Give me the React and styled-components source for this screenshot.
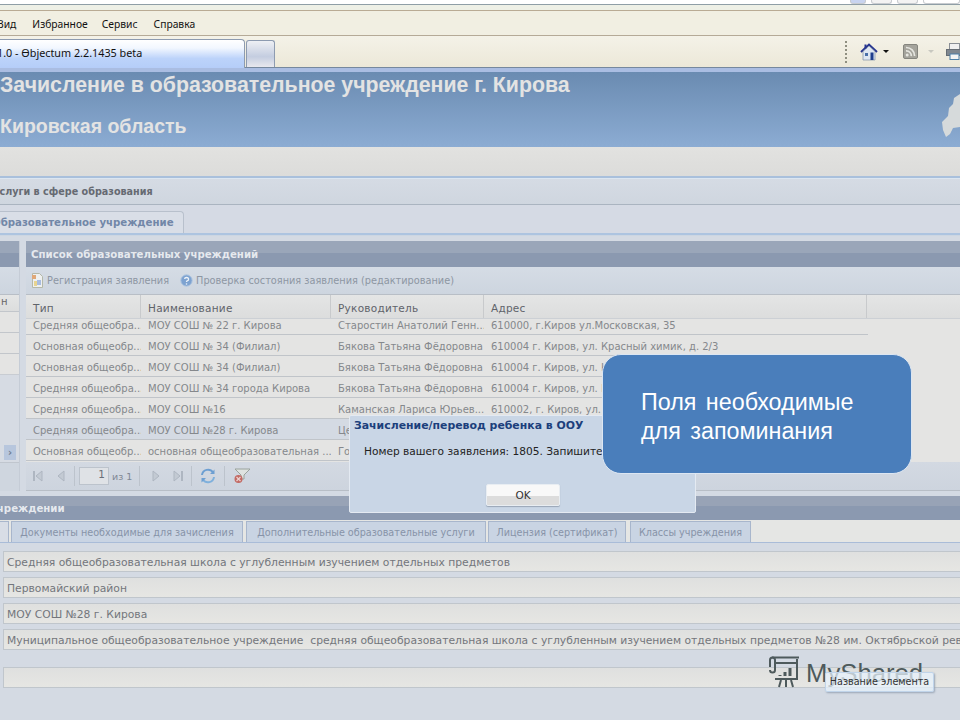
import React from "react";
import styled, { createGlobalStyle } from "styled-components";

const GlobalStyle = createGlobalStyle`
  html, body {
    margin: 0;
    padding: 0;
    background: #d4dae3;
  }
  * {
    box-sizing: border-box;
  }
`;

const Page = styled.div`
  position: relative;
  width: 960px;
  height: 720px;
  overflow: hidden;
  background: #d4dae3;
  font-family: "DejaVu Sans", sans-serif;
  font-size: 10px;
`;

const TopStrip = styled.div`
  height: 11px;
  background: linear-gradient(#ffffff 0 4px, #8f9ea6 4px 5px, #eef0e6 5px 10px, #b9ab94 10px 11px);
  display: flex;
  justify-content: flex-end;
  align-items: flex-start;
  gap: 5px;
`;

const TopKey = styled.div`
  width: ${(p) => p.$w}px;
  height: 4px;
  background: ${(p) => p.$bg || "#f3f3f3"};
  border: 1px solid #c8ccd0;
  border-top: none;
  border-radius: 0 0 3px 3px;
`;

const MenuBar = styled.div`
  height: 25px;
  padding-top: 1px;
  background: #f1efe2;
  border-bottom: 1px solid #b5aa97;
  display: flex;
  align-items: center;
  color: #111;
  font-family: "Noto Sans", sans-serif;
  font-size: 10.3px;
`;

const MenuItem = styled.span`
  margin-left: ${(p) => p.$ml}px;
`;

const BrowserBar = styled.div`
  height: 32px;
  padding-top: 3px;
  background: linear-gradient(#f4f2e8, #ece8d8);
  display: flex;
  align-items: flex-end;
  border-bottom: 1px solid #76889e;
`;

const PageTab = styled.div`
  width: 245px;
  height: 29px;
  padding: 0 0 3px 0;
  margin-bottom: -1px;
  border: 1px solid #8d9bb0;
  border-left: none;
  border-bottom: none;
  border-radius: 0 4px 0 0;
  background: linear-gradient(#ffffff, #f2f7ff 8px, #bcd3fa 66%, #b5cdf8);
  display: flex;
  align-items: center;
  font-family: "Noto Sans", sans-serif;
  font-size: 10.8px;
  color: #111;
  white-space: nowrap;
`;

const TabText = styled.span`
  margin-left: -3px;
`;

const NewTab = styled.div`
  width: 29px;
  height: 27px;
  margin-left: 1px;
  border: 1px solid #8d9bb0;
  border-bottom: none;
  border-radius: 3px 3px 0 0;
  background: linear-gradient(#eef0f4, #c4cde0 60%, #e8e8ee);
`;

const Tools = styled.div`
  margin-left: auto;
  height: 100%;
  padding: 3px 0 6px 0;
  width: 115px;
  display: flex;
  align-items: center;
  & > svg {
    flex: none;
  }
`;

const Grip = styled.div`
  width: 2px;
  height: 22px;
  border-left: 2px dotted #8f8f80;
  margin-right: 13px;
`;

const Caret = styled.span`
  flex: none;
  width: 0;
  height: 0;
  margin: 0 ${(p) => p.$mr || 12}px 0 ${(p) => p.$ml || 7}px;
  border-left: 3px solid transparent;
  border-right: 3px solid transparent;
  border-top: 3px solid ${(p) => p.$c || "#111"};
`;

const ThemeStripe = styled.div`
  height: 4px;
  background: #aabde2;
`;

const Banner = styled.header`
  position: relative;
  height: 75px;
  background: linear-gradient(#6a8bb1, #8cacd3);
  color: #e3e3e3;
  font-family: "Liberation Sans", sans-serif;
  font-weight: bold;
  overflow: hidden;
`;

const BannerTitle = styled.div`
  font-size: 21.3px;
  line-height: 24px;
  padding-top: 1px;
`;

const BannerRegion = styled.div`
  font-size: 19.5px;
  line-height: 22px;
  margin-top: 18px;
`;

const RegionMap = styled.svg`
  position: absolute;
  right: 0;
  top: 20px;
`;

const GrayBand = styled.div`
  height: 31px;
  background: linear-gradient(#e2e2e0, #dcdcda);
  border-bottom: 2px solid #a9c0dc;
`;

const SectionTitle = styled.div`
  height: 27px;
  background: linear-gradient(#d5dbe4, #cfd6df);
  border-top: 1px solid #dce6f0;
  border-bottom: 1px solid #aab4c0;
  display: flex;
  align-items: center;
  color: #666a72;
  font-weight: bold;
  font-size: 9.65px;
  white-space: nowrap;
`;

const Clip = styled.span`
  margin-left: ${(p) => p.$ml}px;
`;

const ActiveTabRow = styled.div`
  height: 30px;
  padding-top: 6px;
  background: #d5dae4;
  border-bottom: 2px solid #adc4e0;
  display: flex;
`;

const ActiveTab = styled.div`
  width: 184px;
  height: 22px;
  padding-bottom: 1px;
  border: 1px solid #b8c0cc;
  border-left: none;
  border-bottom: none;
  border-radius: 0 4px 0 0;
  background: #d9dee7;
  display: flex;
  align-items: center;
  color: #7287a8;
  font-weight: bold;
  font-size: 10.2px;
  white-space: nowrap;
`;

const Panels = styled.div`
  height: 261px;
  padding-top: 5px;
  border-top: 1px solid #ccd6e2;
  display: flex;
  gap: 6px;
`;

const PanelHead = styled.div`
  height: 26px;
  padding: 1px 5px 0;
  background: linear-gradient(#9aa6b9 0 12px, #8b99b0 12px);
  display: flex;
  align-items: center;
  color: #e6e9ee;
  font-weight: bold;
  font-size: 10.2px;
  white-space: nowrap;
`;

const SidePanel = styled.aside`
  width: 20px;
  height: 250px;
  overflow: hidden;
  border-right: 1px solid #c5ccd6;
  display: flex;
  flex-direction: column;
`;

const Toolbar = styled.div`
  height: 28px;
  padding: 0 0 0 5px;
  background: linear-gradient(#d5dce5, #cdd5df);
  border-bottom: 1px solid #b8bec6;
  display: flex;
  align-items: center;
  gap: 11px;
  color: #8d96a2;
  font-size: 9.75px;
  white-space: nowrap;
`;

const ToolButton = styled.span`
  display: flex;
  align-items: center;
  gap: 3px;
`;

const SideHead = styled.div`
  height: 16px;
  background: linear-gradient(#e4e5e5, #dcdddd);
  color: #666;
  line-height: 14px;
  overflow: hidden;
`;

const SideRow = styled.div`
  flex: none;
  height: 21px;
  background: #e4e4e3;
  border-top: 1px solid #c2c6cb;
`;

const SideFill = styled.div`
  flex: 1;
  background: #d6dbe3;
  border-top: 1px solid #c8ccd2;
  padding: 70px 0 0 4px;
`;

const ScrollBtn = styled.div`
  width: 12px;
  height: 15px;
  background: #b7c6dd;
  color: #6f7c90;
  font-weight: bold;
  font-size: 10px;
  display: flex;
  align-items: center;
  justify-content: center;
`;

const SidePager = styled.div`
  flex: none;
  height: 29px;
  background: #cfd6df;
  border-top: 1px solid #c0c6ce;
`;

const MainPanel = styled.section`
  flex: 1;
  height: 250px;
  display: flex;
  flex-direction: column;
  min-width: 0;
`;

const COLUMNS = "115px 190px 153px 383px 1fr";
const ROW_COLUMNS = "115px 190px 153px 383px";

const GridHead = styled.div`
  display: grid;
  grid-template-columns: ${COLUMNS};
  height: 24px;
  background: linear-gradient(#e4e5e5, #dcdddd);
  border-bottom: 1px solid #ccd0d5;
`;

const HeadCell = styled.div`
  padding: 7px 0 0 7px;
  font-size: 10.5px;
  letter-spacing: 0.25px;
  color: #5f636a;
  border-right: 1px solid #c8cacc;
`;

const GridBody = styled.div`
  height: 143px;
  overflow: hidden;
  background: #e4e4e3;
`;

const Row = styled.div`
  display: grid;
  grid-template-columns: ${ROW_COLUMNS};
  width: 842px;
  height: 21px;
  margin-top: ${(p) => (p.$first ? -5 : 0)}px;
  background: ${(p) => (p.$selected ? "#d4dae3" : "transparent")};
  border-bottom: 1px solid #c0c4c9;
`;

const Cell = styled.div`
  padding: 2px 0 0 7px;
  line-height: 20px;
  color: #85888c;
  white-space: nowrap;
  overflow: hidden;
`;

const Pager = styled.div`
  height: 29px;
  padding-left: 7px;
  background: linear-gradient(#d3d9e2, #cdd4de);
  border-bottom: 1px solid #b8bec6;
  display: flex;
  align-items: center;
  color: #808794;
  font-size: 9.5px;
`;

const PageInput = styled.div`
  width: 30px;
  height: 18px;
  margin: 0 3px 0 0;
  padding-right: 3px;
  background: #dfe2e6;
  border: 1px solid #bcc3cc;
  text-align: right;
  color: #6a6f78;
  font-size: 10.5px;
`;

const PagerSep = styled.div`
  width: 1px;
  height: 20px;
  margin: 0 ${(p) => p.$m || 8}px 0 ${(p) => p.$ml || p.$m || 8}px;
  background: #bcc3cc;
`;

const PagerIcon = styled.svg`
  margin-right: ${(p) => p.$mr || 0}px;
  flex: none;
`;

const DetailHead = styled(PanelHead)`
  height: 24px;
  padding-left: 0;
  background: linear-gradient(#98a3b6 0 10px, #8b99b0 10px);
`;

const DetailTabs = styled.div`
  height: 23px;
  padding-top: 1px;
  border-bottom: 1px solid #a9bcd8;
  background: #e5e6e4;
  display: flex;
  gap: 2px;
`;

const DetailTab = styled.div`
  width: ${(p) => p.$w}px;
  margin-right: ${(p) => p.$mr || 0}px;
  border: 1px solid #a8b6cc;
  border-left: ${(p) => (p.$cut ? "none" : "1px solid #a8b6cc")};
  border-bottom: none;
  background: ${(p) => (p.$blank ? "#d8dde6" : "#c9d4e3")};
  color: #8793a8;
  font-size: 9.65px;
  line-height: 22px;
  text-align: center;
  white-space: nowrap;
  overflow: hidden;
`;

const Fields = styled.div`
  padding: 8px 0 0 3px;
  display: flex;
  flex-direction: column;
  gap: 5px;
`;

const Field = styled.div`
  height: 21px;
  margin-top: ${(p) => p.$mt || 0}px;
  padding-left: 3px;
  background: linear-gradient(#dfe0df, #e6e6e3);
  border: 1px solid #c0c6cc;
  border-right: none;
  line-height: 21px;
  color: #73767c;
  font-size: 10.75px;
  white-space: pre;
  overflow: hidden;
`;

const Dialog = styled.div`
  position: absolute;
  left: 349px;
  top: 415px;
  width: 347px;
  height: 98px;
  background: #c9d6e6;
  border: 1px solid #e4eaf2;
  border-radius: 2px;
  padding: 3px 0 0 4px;
  display: flex;
  flex-direction: column;
`;

const DialogTitle = styled.div`
  color: #1c3f7c;
  font-weight: bold;
  font-size: 10.9px;
  line-height: 14px;
`;

const DialogText = styled.div`
  margin: 11px 0 0 10px;
  color: #222;
  font-size: 10.6px;
  line-height: 14px;
  white-space: nowrap;
`;

const OkButton = styled.div`
  width: 74px;
  height: 22px;
  margin: 26px 0 0 132px;
  background: linear-gradient(#f8f8f8 0 55%, #dcdcdc 55%);
  border: 1px solid #e8edf2;
  box-shadow: 0 1px 1px #9aa6b6;
  border-radius: 2px;
  text-align: center;
  line-height: 20px;
  color: #333;
  font-size: 10.5px;
`;

const Callout = styled.div`
  position: absolute;
  left: 602px;
  top: 354px;
  width: 310px;
  height: 120px;
  padding: 33px 0 0 38px;
  background: #4a7ebb;
  border: 1px solid #dce6f2;
  border-radius: 19px;
  color: #fff;
  font-family: "Liberation Sans", sans-serif;
  font-size: 23.3px;
  line-height: 29px;
  word-spacing: 3px;
`;

const Watermark = styled.div`
  position: absolute;
  left: 767px;
  top: 656px;
  display: flex;
  align-items: flex-start;
  gap: 5px;
  color: #4e5a5c;
  font-family: "Liberation Sans", sans-serif;
  font-size: 25.7px;
  line-height: 34px;
`;

const Tooltip = styled.div`
  position: absolute;
  left: 825px;
  top: 672px;
  width: 109px;
  height: 20px;
  background: rgba(232, 242, 252, 0.72);
  border: 1px solid #c0d4ea;
  border-radius: 2px;
  box-shadow: 1px 1px 2px #9aa6b6;
  text-align: center;
  line-height: 18px;
  color: #333;
  font-size: 9.6px;
`;

const ROWS = [
  ["Средняя общеобра...", "МОУ СОШ № 22 г. Кирова", "Старостин Анатолий Генн...", "610000, г.Киров ул.Московская, 35"],
  ["Основная общеобр...", "МОУ СОШ № 34 (Филиал)", "Бякова Татьяна Фёдоровна", "610004 г. Киров, ул. Красный химик, д. 2/3"],
  ["Основная общеобр...", "МОУ СОШ № 34 (Филиал)", "Бякова Татьяна Фёдоровна", "610004 г. Киров, ул. Красный химик, д. 2/3"],
  ["Средняя общеобра...", "МОУ СОШ № 34 города Кирова", "Бякова Татьяна Фёдоровна", "610004 г. Киров, ул. Красный химик, д. 2/3"],
  ["Средняя общеобра...", "МОУ СОШ №16", "Каманская Лариса Юрьев...", "610002, г. Киров, ул. Ленина"],
  ["Средняя общеобра...", "МОУ СОШ №28 г. Кирова", "Цепелева Ольга", "610000, г. Киров"],
  ["Основная общеобр...", "основная общеобразовательная ...", "Головина Ирина", "610000, г. Киров"],
];

const HomeIcon = () => (
  <svg width="18" height="18" viewBox="0 0 18 18">
    <path d="M1 9 9 1.500 17 9" fill="none" stroke="#27358f" strokeWidth="2" />
    <path d="M3 8.500V17h12V8.500L9 3z" fill="#dfe7f2" stroke="#7f8fa8" strokeWidth=".7" />
    <rect x="4.500" y="1.500" width="2" height="4" fill="#27358f" />
    <rect x="5" y="10" width="3" height="3" fill="#4a6fa8" />
    <rect x="10.500" y="9.500" width="3" height="7.500" fill="#1f3e8c" />
  </svg>
);

const RssIcon = () => (
  <svg width="15" height="15" viewBox="0 0 15 15">
    <rect x=".5" y=".5" width="14" height="14" rx="1.500" fill="#a4a39b" stroke="#85857e" />
    <circle cx="4.200" cy="11" r="1.500" fill="#e6e6e0" />
    <path d="M3 6.800a5 5 0 0 1 5.300 5.300M3 3.500a8.400 8.400 0 0 1 8.600 8.600" fill="none" stroke="#e6e6e0" strokeWidth="1.700" />
  </svg>
);

const PrintIcon = () => (
  <svg width="16" height="17" viewBox="0 0 16 17">
    <rect x="3.500" y=".5" width="10" height="6" fill="#f0f0f0" stroke="#8a8f96" />
    <rect x=".5" y="6.500" width="16" height="6" fill="#7f8790" stroke="#666d75" />
    <rect x="4" y="11" width="9" height="5.500" fill="#f4f4f4" stroke="#4c7fa8" />
  </svg>
);

const PageIcon = () => (
  <svg width="13" height="15" viewBox="0 0 13 15">
    <path d="M1.500.5h7l3 3v11h-10z" fill="#eef0f0" stroke="#b4b8a8" />
    <rect x="1" y="2" width="4" height="4" fill="#e0a878" />
    <rect x="6" y="7" width="4" height="5" fill="#a8bce0" />
    <rect x="3" y="8" width="3" height="5" fill="#e8d490" />
  </svg>
);

const HelpIcon = () => (
  <svg width="13" height="13" viewBox="0 0 13 13">
    <circle cx="6.500" cy="6.500" r="5.700" fill="#7da2d0" stroke="#b0c6e0" />
    <path d="M4.600 5a2 1.700 0 1 1 2.600 1.800c-.5.3-.7.6-.7 1.200" fill="none" stroke="#eef3f8" strokeWidth="1.300" />
    <circle cx="6.500" cy="10" r=".8" fill="#eef3f8" />
  </svg>
);

const Nav = ({ dir, bar, mr }) => (
  <PagerIcon width="12" height="14" viewBox="0 0 12 14" $mr={mr}>
    <path d={dir === "left" ? "M9 2v10L3 7z" : "M3 2v10l6-5z"} fill="#c3cad3" stroke="#aeb6c1" />
    {bar && <rect x={dir === "left" ? 0 : 10} y="2" width="2" height="10" fill="#aeb6c1" />}
  </PagerIcon>
);

const RefreshIcon = () => (
  <PagerIcon width="16" height="16" viewBox="0 0 16 16">
    <path d="M2 7a6 6 0 0 1 11-2.500" fill="none" stroke="#6d9fd2" strokeWidth="2" />
    <path d="M14 9a6 6 0 0 1-11 2.500" fill="none" stroke="#7fb0dc" strokeWidth="2" />
    <path d="M14.500 1.500v4.500h-4.500zM1.500 14.500V10H6z" fill="#6d9fd2" />
  </PagerIcon>
);

const FilterIcon = () => (
  <PagerIcon width="18" height="16" viewBox="0 0 18 16">
    <path d="M2 1h15l-6 6v4H8V7z" fill="#dfe3e0" stroke="#9aa39c" />
    <circle cx="5.500" cy="11" r="4" fill="#c26a64" />
    <path d="M3.500 9l4 4m0-4l-4 4" stroke="#ecd2d0" strokeWidth="1.200" />
  </PagerIcon>
);

const LogoIcon = () => (
  <svg width="34" height="32" viewBox="0 0 34 32" fill="none" stroke="#4e5a5c" strokeWidth="2">
    <path d="M3 11V4a2.500 2.500 0 0 1 5 0v10a2.500 2.500 0 0 1-5 0" />
    <path d="M5 1.500h27M8 7h22v16H8M30 3v20" />
    <path d="M14 24l-2 7M19 24v7M24 24l2 7" />
    <path d="M13 19v1M18 16v4M23 12v8" strokeWidth="3" />
  </svg>
);

export default function App() {
  return (
    <Page>
      <GlobalStyle />
      <TopStrip>
        <TopKey $w={16} $bg="#c8d4f0" />
        <TopKey $w={21} />
        <TopKey $w={21} />
        <TopKey $w={37} $bg="#fff" />
      </TopStrip>
      <MenuBar>
        <MenuItem $ml={-3}>Вид</MenuItem>
        <MenuItem $ml={16}>Избранное</MenuItem>
        <MenuItem $ml={14}>Сервис</MenuItem>
        <MenuItem $ml={16}>Справка</MenuItem>
      </MenuBar>
      <BrowserBar>
        <PageTab>
          <TabText>1.0 - Өbjectum 2.2.1435 beta</TabText>
        </PageTab>
        <NewTab />
        <Tools>
          <Grip />
          <HomeIcon />
          <Caret $ml={5} $mr={14} />
          <RssIcon />
          <Caret $c="#c8c8c0" $ml={10} $mr={12} />
          <PrintIcon />
        </Tools>
      </BrowserBar>
      <ThemeStripe />
      <Banner>
        <BannerTitle>Зачисление в образовательное учреждение г. Кирова</BannerTitle>
        <BannerRegion>Кировская область</BannerRegion>
        <RegionMap width="20" height="45" viewBox="0 0 20 45">
          <path d="M20 2 14 6l-1 6-4 4-1 8-6 6 1 8 3 7 4-3 3-6 7-1z" fill="#d6dadb" />
        </RegionMap>
      </Banner>
      <GrayBand />
      <SectionTitle>
        <Clip $ml={-8}>Услуги в сфере образования</Clip>
      </SectionTitle>
      <ActiveTabRow>
        <ActiveTab>
          <Clip $ml={-8}>Образовательное учреждение</Clip>
        </ActiveTab>
      </ActiveTabRow>
      <Panels>
        <SidePanel>
          <PanelHead />
          <Toolbar />
          <SideHead>
            <Clip $ml={1}>н</Clip>
          </SideHead>
          <SideRow />
          <SideRow />
          <SideRow />
          <SideFill>
            <ScrollBtn>›</ScrollBtn>
          </SideFill>
          <SidePager />
        </SidePanel>
        <MainPanel>
          <PanelHead>Список образовательных учреждений</PanelHead>
          <Toolbar>
            <ToolButton>
              <PageIcon />
              Регистрация заявления
            </ToolButton>
            <ToolButton>
              <HelpIcon />
              Проверка состояния заявления (редактирование)
            </ToolButton>
          </Toolbar>
          <GridHead>
            <HeadCell>Тип</HeadCell>
            <HeadCell>Наименование</HeadCell>
            <HeadCell>Руководитель</HeadCell>
            <HeadCell>Адрес</HeadCell>
          </GridHead>
          <GridBody>
            {ROWS.map((row, i) => (
              <Row key={i} $first={i === 0} $selected={i === 5}>
                {row.map((text, j) => (
                  <Cell key={j}>{text}</Cell>
                ))}
              </Row>
            ))}
          </GridBody>
          <Pager>
            <Nav dir="left" bar mr={10} />
            <Nav dir="left" mr={3} />
            <PagerSep $m={4} />
            <PageInput>1</PageInput>
            из 1
            <PagerSep $ml={7} $m={10} />
            <Nav dir="right" mr={9} />
            <Nav dir="right" bar />
            <PagerSep />
            <RefreshIcon />
            <PagerSep />
            <FilterIcon />
          </Pager>
        </MainPanel>
      </Panels>
      <DetailHead>
        <Clip $ml={-11}>Учреждении</Clip>
      </DetailHead>
      <DetailTabs>
        <DetailTab $w={9} $cut $blank />
        <DetailTab $w={232} $mr={1}>Документы необходимые для зачисления</DetailTab>
        <DetailTab $w={240}>Дополнительные образовательные услуги</DetailTab>
        <DetailTab $w={138} $mr={2}>Лицензия (сертификат)</DetailTab>
        <DetailTab $w={121}>Классы учреждения</DetailTab>
      </DetailTabs>
      <Fields>
        <Field>Средняя общеобразовательная школа с углубленным изучением отдельных предметов</Field>
        <Field>Первомайский район</Field>
        <Field>МОУ СОШ №28 г. Кирова</Field>
        <Field>Муниципальное общеобразовательное учреждение  средняя общеобразовательная школа с углубленным изучением отдельных предметов №28 им. Октябрьской революции</Field>
        <Field $mt={12} />
      </Fields>
      <Dialog>
        <DialogTitle>Зачисление/перевод ребенка в ООУ</DialogTitle>
        <DialogText>Номер вашего заявления: 1805. Запишите его.</DialogText>
        <OkButton>OK</OkButton>
      </Dialog>
      <Callout>
        Поля необходимые
        <br />
        для запоминания
      </Callout>
      <Watermark>
        <LogoIcon />
        MyShared
      </Watermark>
      <Tooltip>Название элемента</Tooltip>
    </Page>
  );
}
